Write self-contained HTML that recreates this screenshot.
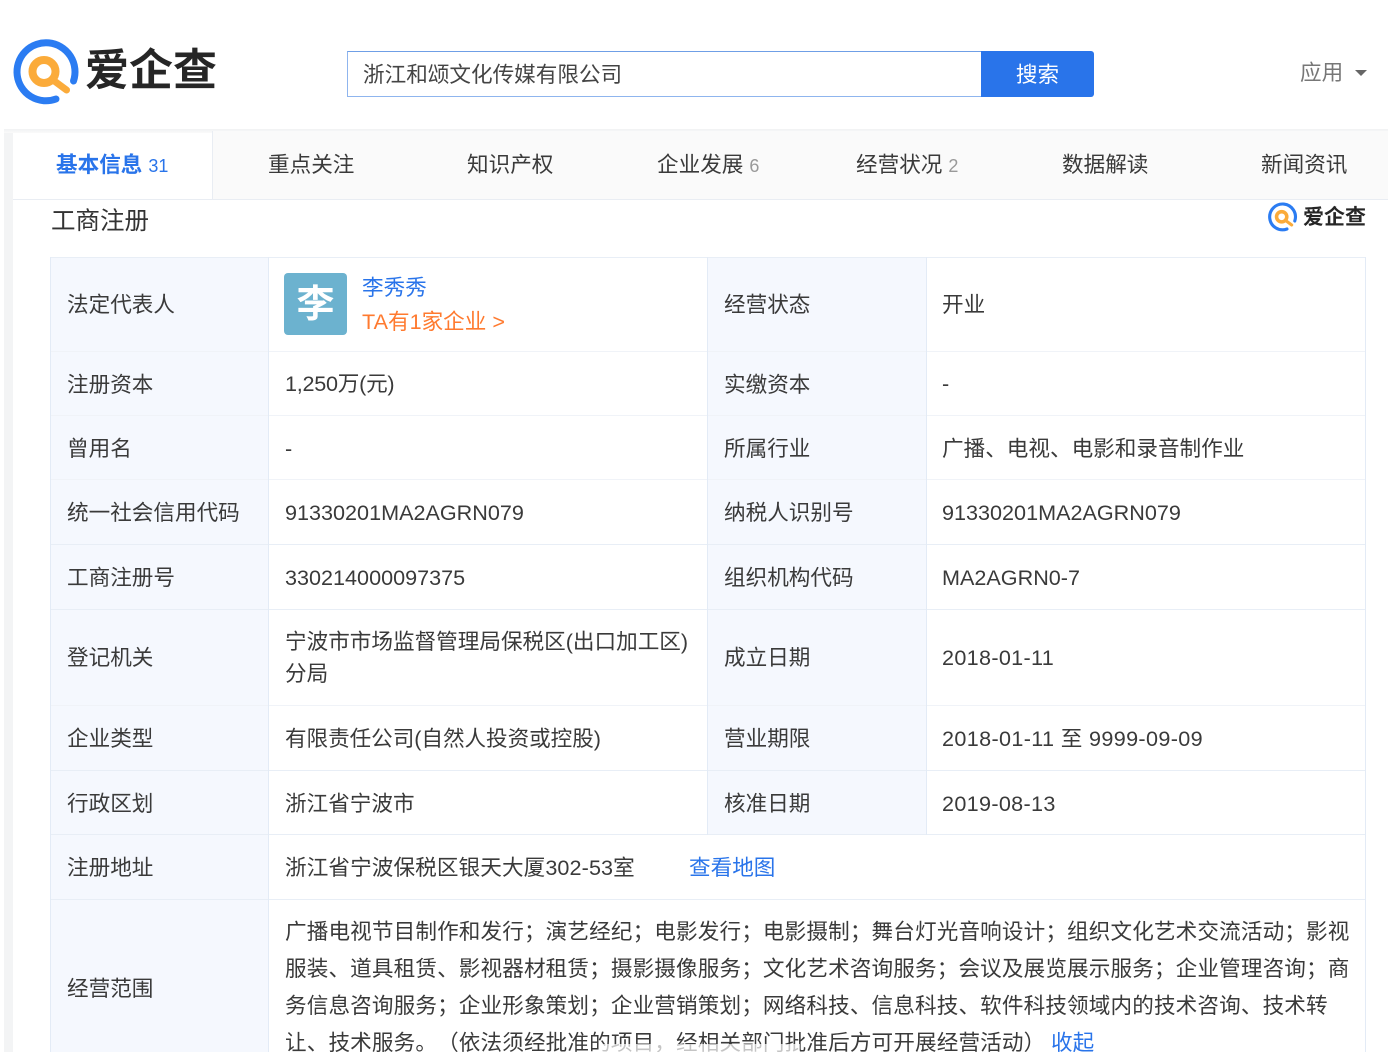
<!DOCTYPE html>
<html lang="zh"><head><meta charset="utf-8"><title>爱企查</title>
<style>
html,body{margin:0;padding:0;background:#fff}
#p{position:relative;width:1396px;height:1052px;overflow:hidden;background:#fff;font-family:"Liberation Sans","Noto Sans CJK SC",sans-serif;color:#3a3a3a;font-size:21.6px;text-spacing-trim:space-all}
#p div{position:absolute;white-space:nowrap}
.t{line-height:32px;height:32px}
.lb{background:#f5f8fe}
.h{height:1px;background:#e8eef6;left:50px;width:1315px}
.v{width:1px;background:#e3ebf6}
.nav{top:149px;line-height:32px;color:#3a3a3a;font-size:21.6px}
.nav i{font-style:normal;color:#999;font-size:18px}
.bl{color:#2974ea}
.d{letter-spacing:.32px}
.l{letter-spacing:.13px}
</style></head><body><div id="p">
<!-- header -->
<svg style="position:absolute;left:11px;top:36px" width="72" height="72" viewBox="0 0 72 72">
<path d="M45 63A29 29 0 1 1 62.500 45" fill="none" stroke="#2b7cf2" stroke-width="7" stroke-linecap="round"/>
<circle cx="33" cy="35.500" r="11.500" fill="none" stroke="#fbab3a" stroke-width="8"/>
<path d="M42 44L55.500 54" stroke="#fbab3a" stroke-width="7" stroke-linecap="round"/>
</svg>
<div style="left:85px;top:41px;font-size:44px;line-height:60px;color:#262626;font-weight:700">爱企查</div>
<div style="left:347px;top:51px;width:634px;height:44px;border:1px solid #8fb5ee;border-top-color:#6f9fe6;border-right:0;background:#fff"></div>
<div class="t" style="left:363px;top:59px;font-size:21.600px;color:#444">浙江和颂文化传媒有限公司</div>
<div style="left:981px;top:51px;width:113px;height:46px;background:#2974ea;border-radius:0 3px 3px 0;color:#fff;text-align:center;line-height:47px;font-size:21.600px">搜索</div>
<div class="t" style="left:1300px;top:57px;color:#777;font-size:21.600px">应用</div>
<div style="left:1355px;top:70px;width:0;height:0;border-left:6px solid transparent;border-right:6px solid transparent;border-top:6px solid #666"></div>
<!-- page frame -->
<div style="left:4px;top:129px;width:9px;height:923px;background:#f3f4f5"></div>
<div style="left:4px;top:129px;width:1384px;height:4px;background:linear-gradient(#f1f2f3,#fafafa)"></div>
<!-- tabs -->
<div style="left:213px;top:131px;width:1175px;height:68px;background:#fafafa"></div>
<div style="left:212px;top:131px;width:1px;height:68px;background:#e9edf3"></div>
<div style="left:13px;top:199px;width:1375px;height:1px;background:#e9edf3"></div>
<div class="nav" style="left:56px;color:#2974ea;font-weight:700">基本信息 <i style="color:#2974ea;font-weight:400">31</i></div>
<div class="nav" style="left:268px">重点关注</div>
<div class="nav" style="left:467px">知识产权</div>
<div class="nav" style="left:657px">企业发展 <i>6</i></div>
<div class="nav" style="left:856px">经营状况 <i>2</i></div>
<div class="nav" style="left:1062px">数据解读</div>
<div class="nav" style="left:1261px">新闻资讯</div>
<!-- title -->
<div style="left:51px;top:205px;font-size:24.500px;line-height:34px;color:#333">工商注册</div>
<svg style="position:absolute;left:1267px;top:201px" width="32" height="32" viewBox="0 0 72 72">
<path d="M45 63A29 29 0 1 1 62.500 45" fill="none" stroke="#2b7cf2" stroke-width="7" stroke-linecap="round"/>
<circle cx="33" cy="35.500" r="11.500" fill="none" stroke="#fbab3a" stroke-width="8"/>
<path d="M42 44L55.500 54" stroke="#fbab3a" stroke-width="7" stroke-linecap="round"/>
</svg>
<div style="left:1303px;top:203px;font-size:21px;line-height:30px;color:#262626;font-weight:700">爱企查</div>
<!-- table backgrounds -->
<div class="lb" style="left:50px;top:257px;width:218px;height:795px"></div>
<div class="lb" style="left:707px;top:257px;width:219px;height:578px"></div>
<!-- table lines -->
<div class="h" style="top:257px"></div><div class="h" style="top:351px;background:#f0f3f8"></div><div class="h" style="top:415px;background:#f0f3f8"></div><div class="h" style="top:479px;background:#f0f3f8"></div><div class="h" style="top:544px"></div><div class="h" style="top:609px"></div><div class="h" style="top:705px;background:#f0f3f8"></div><div class="h" style="top:770px"></div><div class="h" style="top:834px"></div><div class="h" style="top:899px"></div>
<div class="v" style="left:50px;top:257px;height:795px"></div>
<div class="v" style="left:268px;top:257px;height:795px"></div>
<div class="v" style="left:707px;top:257px;height:578px"></div>
<div class="v" style="left:926px;top:257px;height:578px"></div>
<div class="v" style="left:1365px;top:257px;height:795px"></div>
<!-- row 1 -->
<div class="t" style="left:67px;top:289px">法定代表人</div>
<div style="left:284px;top:273px;width:63px;height:62px;background:#6cb2cf;border-radius:4px;color:#fff;font-size:38px;font-weight:700;line-height:65px;text-align:center">李</div>
<div class="t bl" style="left:362px;top:272px">李秀秀</div>
<div class="t" style="left:362px;top:306px;color:#ff7a2f">TA有1家企业 &gt;</div>
<div class="t" style="left:724px;top:289px">经营状态</div>
<div class="t" style="left:942px;top:289px">开业</div>
<!-- row 2 -->
<div class="t" style="left:67px;top:369px">注册资本</div>
<div class="t" style="left:285px;top:368px;letter-spacing:-.25px">1,250万(元)</div>
<div class="t" style="left:724px;top:369px">实缴资本</div>
<div class="t" style="left:942px;top:368px">-</div>
<!-- row 3 -->
<div class="t" style="left:67px;top:433px">曾用名</div>
<div class="t" style="left:285px;top:433px">-</div>
<div class="t" style="left:724px;top:433px">所属行业</div>
<div class="t" style="left:942px;top:433px">广播、电视、电影和录音制作业</div>
<!-- row 4 -->
<div class="t" style="left:67px;top:497px">统一社会信用代码</div>
<div class="t" style="left:285px;top:497px">91330201MA2AGRN079</div>
<div class="t" style="left:724px;top:497px">纳税人识别号</div>
<div class="t" style="left:942px;top:497px">91330201MA2AGRN079</div>
<!-- row 5 -->
<div class="t" style="left:67px;top:562px">工商注册号</div>
<div class="t" style="left:285px;top:562px">330214000097375</div>
<div class="t" style="left:724px;top:562px">组织机构代码</div>
<div class="t" style="left:942px;top:562px">MA2AGRN0-7</div>
<!-- row 6 -->
<div class="t" style="left:67px;top:642px">登记机关</div>
<div class="t" style="left:285px;top:626px">宁波市市场监督管理局保税区(出口加工区)</div>
<div class="t" style="left:285px;top:658px">分局</div>
<div class="t" style="left:724px;top:642px">成立日期</div>
<div class="t d" style="left:942px;top:642px">2018-01-11</div>
<!-- row 7 -->
<div class="t" style="left:67px;top:723px">企业类型</div>
<div class="t" style="left:285px;top:723px;letter-spacing:-.05px">有限责任公司(自然人投资或控股)</div>
<div class="t" style="left:724px;top:723px">营业期限</div>
<div class="t d" style="left:942px;top:723px;letter-spacing:.35px">2018-01-11 至 9999-09-09</div>
<!-- row 8 -->
<div class="t" style="left:67px;top:788px">行政区划</div>
<div class="t" style="left:285px;top:788px">浙江省宁波市</div>
<div class="t" style="left:724px;top:788px">核准日期</div>
<div class="t d" style="left:942px;top:788px">2019-08-13</div>
<!-- row 9 -->
<div class="t" style="left:67px;top:852px">注册地址</div>
<div class="t" style="left:285px;top:852px;letter-spacing:.1px">浙江省宁波保税区银天大厦302-53室</div>
<div class="t bl" style="left:689px;top:852px">查看地图</div>
<!-- row 10 -->
<div class="t" style="left:67px;top:973px">经营范围</div>
<div class="t l" style="left:285px;top:916px">广播电视节目制作和发行；演艺经纪；电影发行；电影摄制；舞台灯光音响设计；组织文化艺术交流活动；影视</div>
<div class="t l" style="left:285px;top:953px">服装、道具租赁、影视器材租赁；摄影摄像服务；文化艺术咨询服务；会议及展览展示服务；企业管理咨询；商</div>
<div class="t l" style="left:285px;top:990px">务信息咨询服务；企业形象策划；企业营销策划；网络科技、信息科技、软件科技领域内的技术咨询、技术转</div>
<div class="t l" style="left:285px;top:1027px">让、技术服务。（依法须经批准的项目，经相关部门批准后方可开展经营活动）</div>
<div class="t bl" style="left:1051px;top:1027px">收起</div>
<!-- faint watermark covering the bottom edge -->
<div style="left:600px;top:1044px;width:200px;height:8px;background:rgba(255,255,255,.7)"></div>
</div></body></html>
